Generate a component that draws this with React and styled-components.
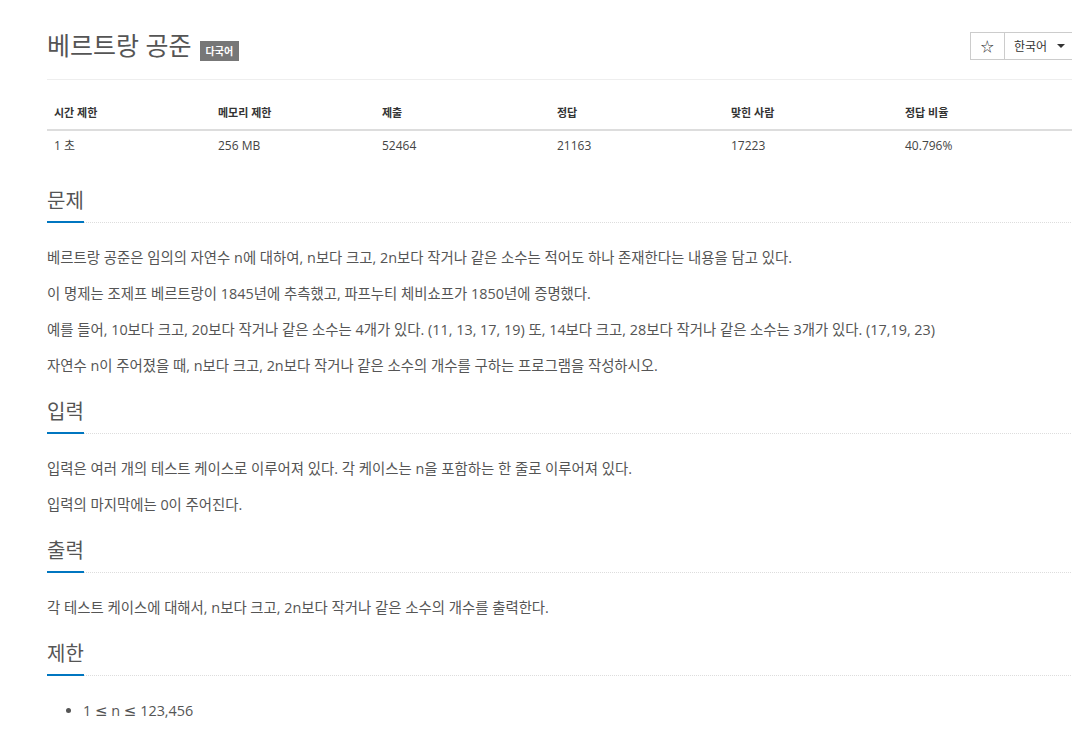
import styled, { createGlobalStyle } from "styled-components";

const GlobalStyle = createGlobalStyle`
  body {
    margin: 0;
    overflow: hidden;
    background: #fff;
    font-family: "Open Sans", "Noto Sans CJK KR", sans-serif;
    color: #555;
  }
`;

const Page = styled.div`
  width: 1028px;
  padding-left: 47px;
`;

const Header = styled.div`
  display: flex;
  justify-content: space-between;
  align-items: center;
  padding: 30px 0 18px;
  border-bottom: 1px solid #eee;
`;

const Title = styled.h1`
  margin: 0;
  font-size: 25px;
  font-weight: 400;
  line-height: 30px;
  color: #555;
`;

const Label = styled.span`
  display: inline-block;
  margin-left: 8px;
  padding: 4px 6px 3px;
  font-size: 10px;
  line-height: 13px;
  font-weight: 700;
  color: #fff;
  background: #777;
  vertical-align: baseline;
`;

const ButtonGroup = styled.div`
  display: flex;
`;

const Button = styled.button`
  display: flex;
  align-items: center;
  gap: 10px;
  height: 28px;
  padding: 0 ${(p) => (p.$icon ? "10px" : "9px")};
  margin-left: -1px;
  border: 1px solid #ccc;
  background: #fff;
  font-family: "Open Sans", "Noto Sans CJK KR", sans-serif;
  font-size: ${(p) => (p.$icon ? "13px" : "12px")};
  color: #333;
`;

const Caret = styled.span`
  display: inline-block;
  width: 0;
  height: 0;
  border-top: 4px solid #333;
  border-left: 4px solid transparent;
  border-right: 4px solid transparent;
`;

const Table = styled.table`
  width: 1025px;
  table-layout: fixed;
  margin: 16px 0 26px;
  border-collapse: collapse;
  font-size: 12px;
`;

const Th = styled.th`
  box-sizing: border-box;
  width: ${(p) => p.$w};
  padding: 8px 7px;
  line-height: 17px;
  text-align: left;
  font-size: 11px;
  font-weight: 700;
  color: #333;
  border-bottom: 2px solid #ddd;
`;

const Td = styled.td`
  padding: 6px 7px 8px;
  line-height: 17px;
  color: #444;
`;

const Section = styled.section`
  margin-bottom: 22px;
`;

const Headline = styled.div`
  display: flex;
  border-bottom: 1px dotted #ddd;
  margin-bottom: 24px;
`;

const H2 = styled.h2`
  margin: 0 0 -1px;
  padding-bottom: 7px;
  font-size: 20px;
  font-weight: 400;
  line-height: 26px;
  color: #555;
  border-bottom: 2px solid #0076c0;
`;

const P = styled.p`
  margin: 0 0 14px;
  font-size: 14.4px;
  line-height: 22px;
  color: #555;
  &:last-child {
    margin-bottom: 0;
  }
`;

const List = styled.ul`
  margin: 0;
  padding-left: 36px;
  font-size: 14.4px;
  line-height: 22px;
  color: #555;
`;

const Op = styled.span`
  font-family: "DejaVu Sans", sans-serif;
  font-size: 15px;
`;

const cols = [
  ["시간 제한", "1 초", "164px"],
  ["메모리 제한", "256 MB", "164px"],
  ["제출", "52464", "175px"],
  ["정답", "21163", "174px"],
  ["맞힌 사람", "17223", "174px"],
  ["정답 비율", "40.796%", "174px"],
];

const sections = [
  {
    title: "문제",
    lines: [
      "베르트랑 공준은 임의의 자연수 n에 대하여, n보다 크고, 2n보다 작거나 같은 소수는 적어도 하나 존재한다는 내용을 담고 있다.",
      "이 명제는 조제프 베르트랑이 1845년에 추측했고, 파프누티 체비쇼프가 1850년에 증명했다.",
      "예를 들어, 10보다 크고, 20보다 작거나 같은 소수는 4개가 있다. (11, 13, 17, 19) 또, 14보다 크고, 28보다 작거나 같은 소수는 3개가 있다. (17,19, 23)",
      "자연수 n이 주어졌을 때, n보다 크고, 2n보다 작거나 같은 소수의 개수를 구하는 프로그램을 작성하시오.",
    ],
  },
  {
    title: "입력",
    lines: [
      "입력은 여러 개의 테스트 케이스로 이루어져 있다. 각 케이스는 n을 포함하는 한 줄로 이루어져 있다.",
      "입력의 마지막에는 0이 주어진다.",
    ],
  },
  {
    title: "출력",
    lines: ["각 테스트 케이스에 대해서, n보다 크고, 2n보다 작거나 같은 소수의 개수를 출력한다."],
  },
];

function App() {
  return (
    <Page>
      <GlobalStyle />
      <Header>
        <Title>
          베르트랑 공준<Label>다국어</Label>
        </Title>
        <ButtonGroup>
          <Button $icon>☆</Button>
          <Button>
            한국어 <Caret />
          </Button>
        </ButtonGroup>
      </Header>

      <Table>
        <thead>
          <tr>
            {cols.map(([h, , w]) => (
              <Th key={h} $w={w}>
                {h}
              </Th>
            ))}
          </tr>
        </thead>
        <tbody>
          <tr>
            {cols.map(([h, v]) => (
              <Td key={h}>{v}</Td>
            ))}
          </tr>
        </tbody>
      </Table>

      {sections.map((s) => (
        <Section key={s.title}>
          <Headline>
            <H2>{s.title}</H2>
          </Headline>
          {s.lines.map((l) => (
            <P key={l}>{l}</P>
          ))}
        </Section>
      ))}

      <Section>
        <Headline>
          <H2>제한</H2>
        </Headline>
        <List>
          <li>
            1 <Op>≤</Op> n <Op>≤</Op> 123,456
          </li>
        </List>
      </Section>
    </Page>
  );
}

export default App;
